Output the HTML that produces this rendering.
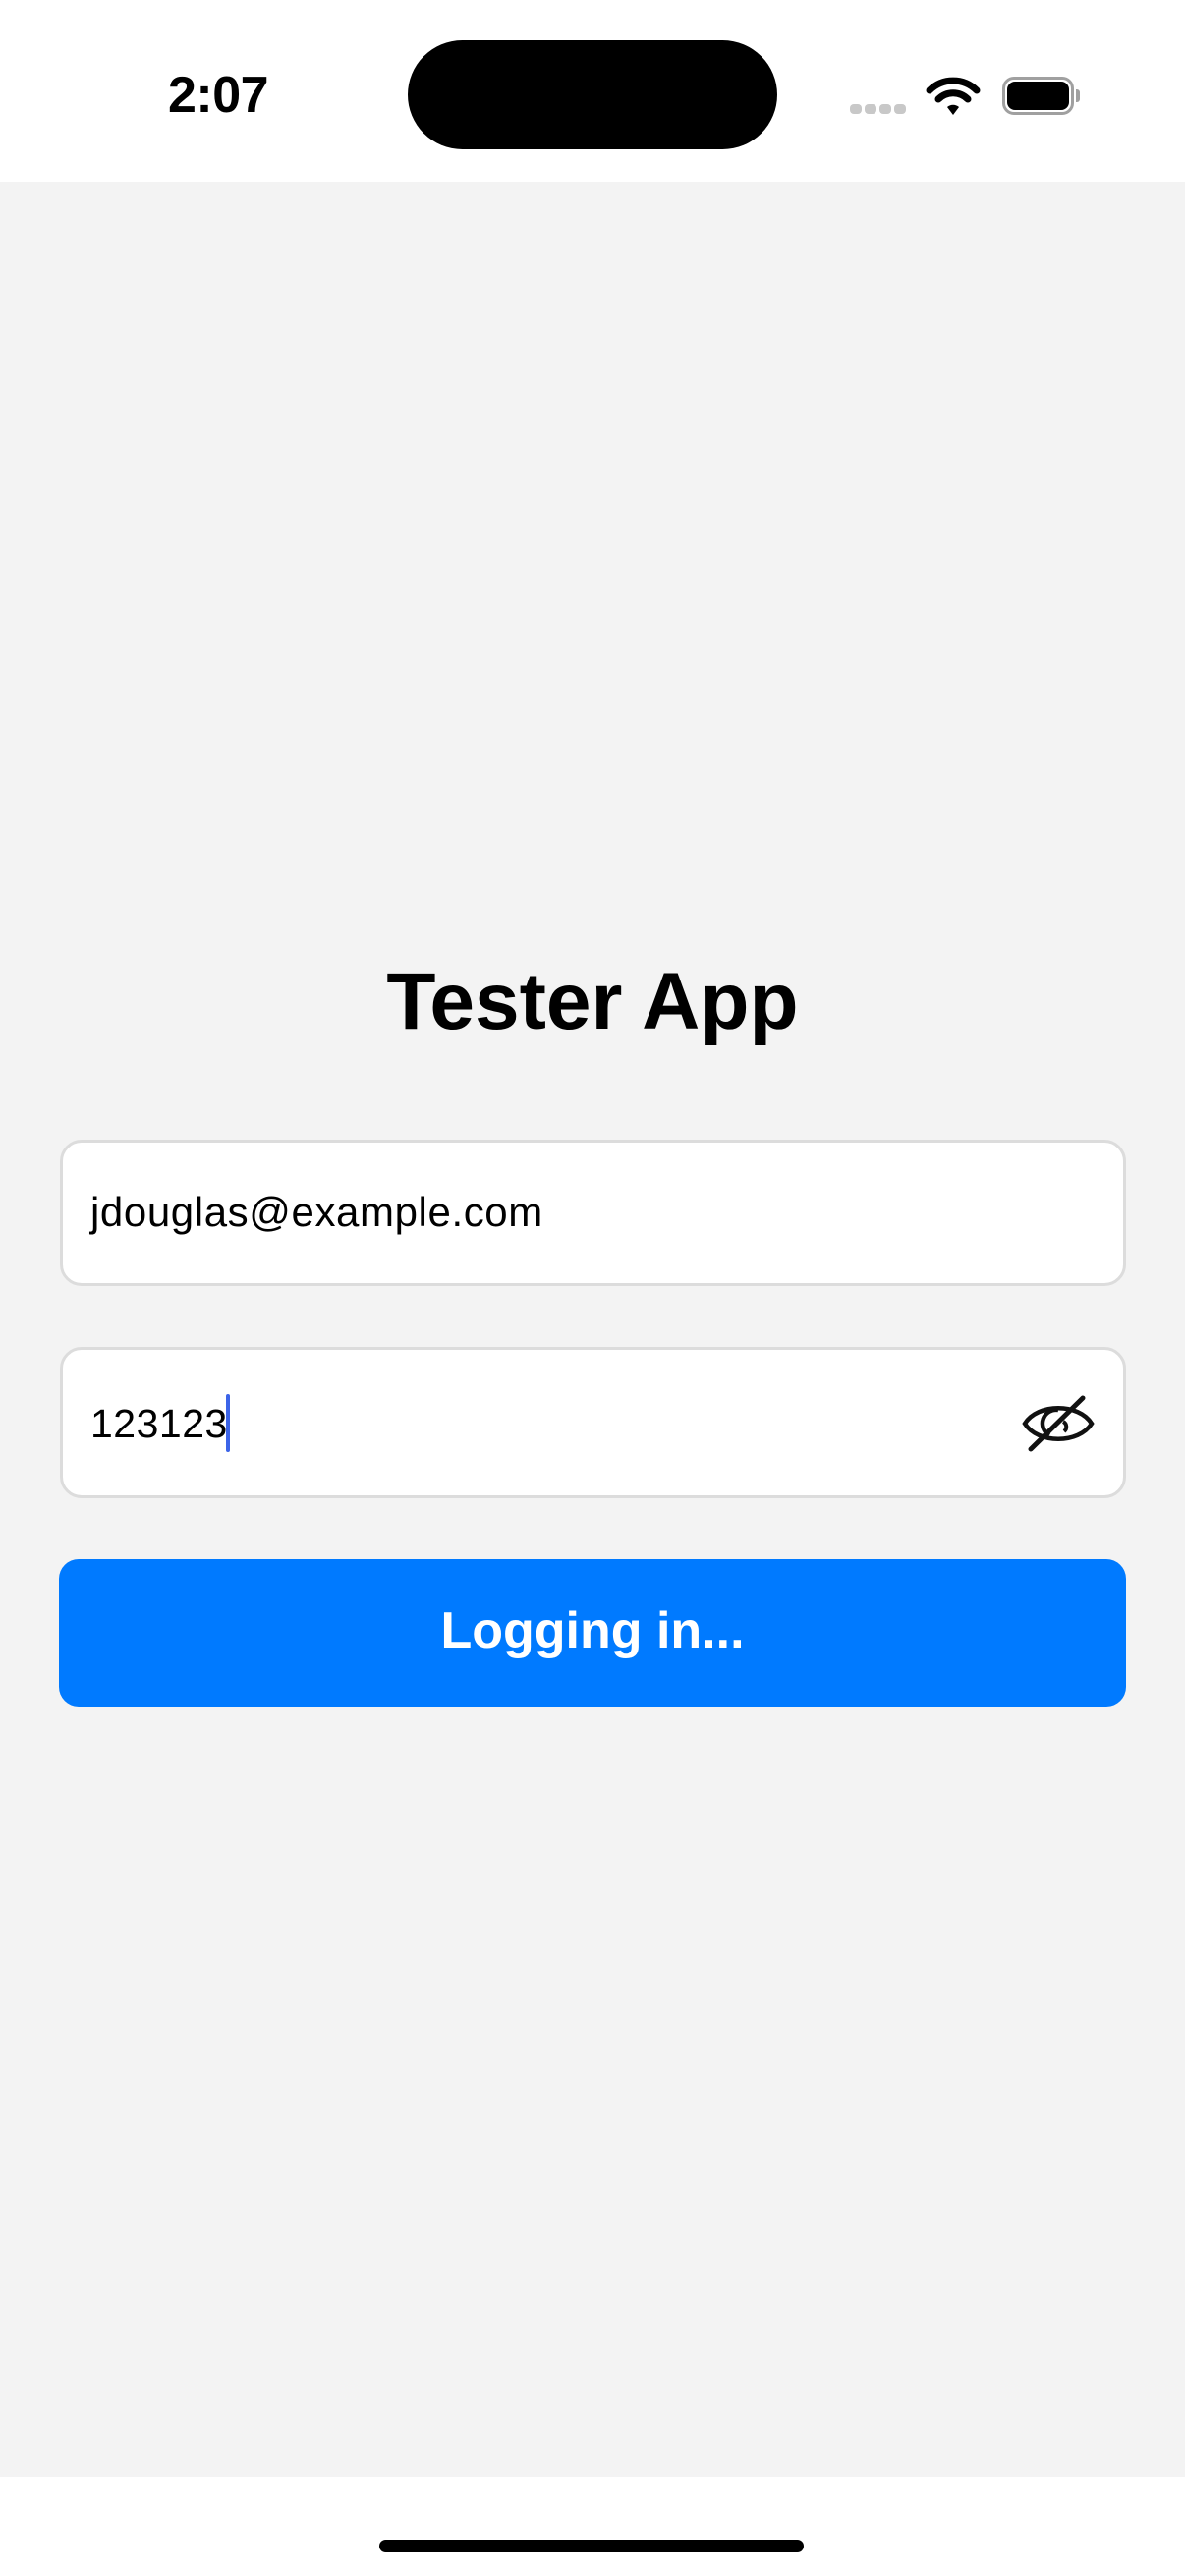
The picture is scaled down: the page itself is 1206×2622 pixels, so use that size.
<!DOCTYPE html>
<html><head><meta charset="utf-8"><style>
*{margin:0;padding:0;box-sizing:border-box}
body{width:1206px;height:2622px;background:#f3f3f3;position:relative;overflow:hidden;font-family:"Liberation Sans",sans-serif}
.abs{position:absolute}
</style></head><body>
<div class="abs" style="left:0;top:0;width:1206px;height:185px;background:#fff"></div>
<div class="abs" style="left:171px;top:70px;font-size:52px;font-weight:bold;line-height:54px;letter-spacing:-0.5px">2:07</div>
<div class="abs" style="left:415px;top:41px;width:376px;height:111px;background:#000;border-radius:56px"></div>
<div class="abs" style="left:865px;top:106px;width:12px;height:10px;background:#c8c8c8;border-radius:4px"></div>
<div class="abs" style="left:880px;top:106px;width:12px;height:10px;background:#c8c8c8;border-radius:4px"></div>
<div class="abs" style="left:895px;top:106px;width:12px;height:10px;background:#c8c8c8;border-radius:4px"></div>
<div class="abs" style="left:910px;top:106px;width:12px;height:10px;background:#c8c8c8;border-radius:4px"></div>
<svg class="abs" style="left:942px;top:76px" width="56" height="42" viewBox="0 0 56 42">
<path d="M4 16 A34 34 0 0 1 52 16" stroke="#000" stroke-width="7" fill="none" stroke-linecap="round"/>
<path d="M13 25 A21 21 0 0 1 43 25" stroke="#000" stroke-width="7" fill="none" stroke-linecap="round"/>
<path d="M22 33 L28 41 L34 33 A9 9 0 0 0 22 33Z" fill="#000"/>
</svg>
<div class="abs" style="left:1020px;top:78px;width:73px;height:39px;border:3px solid #a0a0a0;border-radius:12px"></div>
<div class="abs" style="left:1025px;top:83px;width:63px;height:29px;background:#000;border-radius:8px"></div>
<div class="abs" style="left:1095px;top:91px;width:4px;height:13px;background:#a0a0a0;border-radius:0 3px 3px 0"></div>

<div class="abs" style="left:0;top:975px;width:1206px;text-align:center;font-size:82px;font-weight:bold;line-height:90px">Tester App</div>

<div class="abs" style="left:61px;top:1160px;width:1085px;height:149px;background:#fff;border:3px solid #dcdcdc;border-radius:22px"></div>
<div class="abs" style="left:92px;top:1210px;font-size:42px;line-height:48px;letter-spacing:0.6px;color:#000">jdouglas@example.com</div>

<div class="abs" style="left:61px;top:1371px;width:1085px;height:154px;background:#fff;border:3px solid #dcdcdc;border-radius:22px"></div>
<div class="abs" style="left:92px;top:1425px;font-size:41px;line-height:48px;letter-spacing:0.5px;color:#000">123123</div>
<div class="abs" style="left:230px;top:1419px;width:4px;height:59px;background:#3c64e8;border-radius:2px"></div>
<svg class="abs" style="left:1038px;top:1420px" width="78" height="58" viewBox="0 0 78 58">
<path d="M5 29 C18 8 60 8 73 29 C60 50 18 50 5 29Z" stroke="#111" stroke-width="4.5" fill="none"/>
<path d="M39 15 A14 14 0 0 0 30 41" stroke="#111" stroke-width="4.5" fill="none"/>
<path d="M45 37 A6 6 0 0 0 44 27" stroke="#111" stroke-width="4" fill="none"/>
<path d="M11 55 L64 3" stroke="#111" stroke-width="5" stroke-linecap="round"/>
</svg>

<div class="abs" style="left:60px;top:1587px;width:1086px;height:150px;background:#007aff;border-radius:20px"></div>
<div class="abs" style="left:60px;top:1630px;width:1086px;text-align:center;color:#fff;font-size:52px;font-weight:bold;line-height:60px">Logging in...</div>

<div class="abs" style="left:0;top:2521px;width:1206px;height:101px;background:#fff"></div>
<div class="abs" style="left:386px;top:2585px;width:432px;height:13px;background:#000;border-radius:7px"></div>
</body></html>
